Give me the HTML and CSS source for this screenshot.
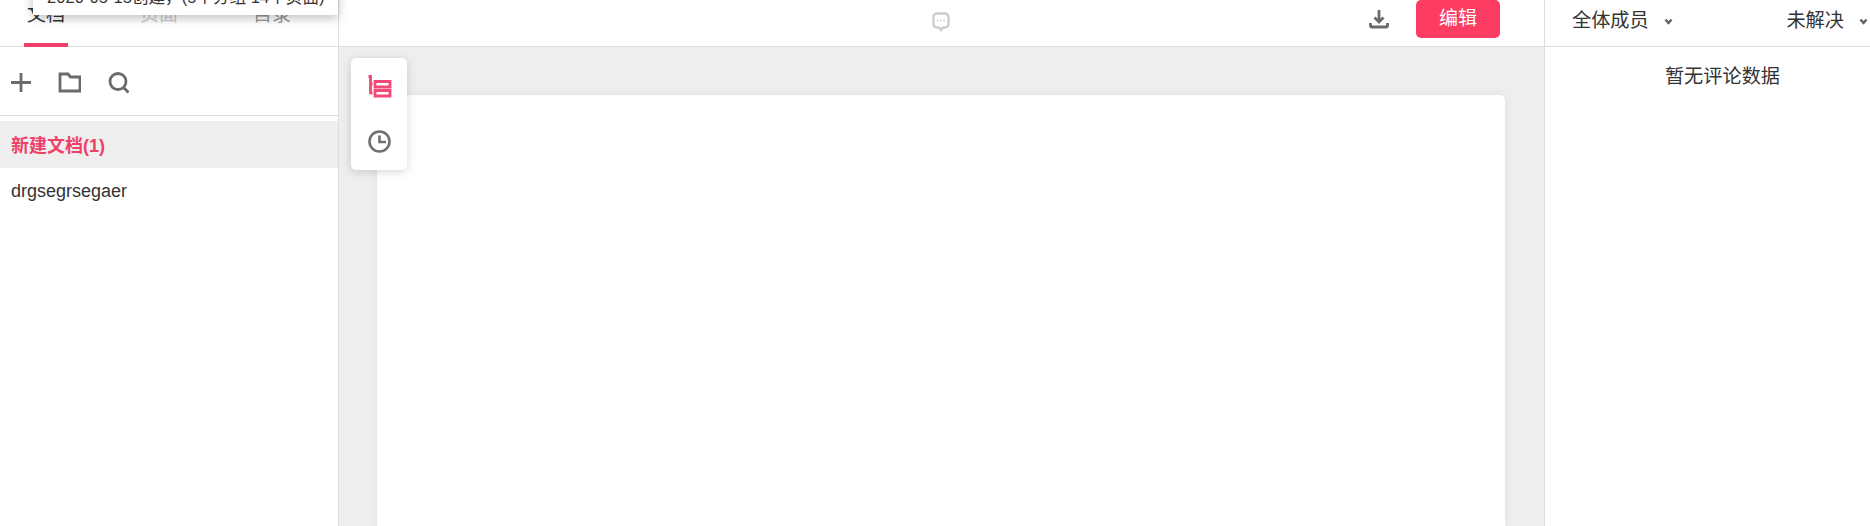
FILE: index.html
```html
<!DOCTYPE html>
<html lang="zh">
<head>
<meta charset="utf-8">
<title>文档</title>
<link rel="stylesheet" href="styles.css">
</head>
<body>
<div class="app">
  <aside class="left">
    <nav class="tabs">
      <span class="tab active">文档</span>
      <span class="tab pale">页面</span>
      <span class="tab">目录</span>
    </nav>
    <div class="tools">
      <svg class="ico" viewBox="0 0 23 23"><path d="M11 2v19M1 11.500h20"/></svg>
      <svg class="ico" viewBox="0 0 23 23"><path d="M2 3h8l2.500 3H22v14H2z"/></svg>
      <svg class="ico" viewBox="0 0 23 23"><circle cx="12" cy="10.500" r="8"/><path d="M17.500 16.500l5 5"/></svg>
    </div>
    <div class="list">
      <div class="group">新建文档(1)</div>
      <div class="item">drgsegrsegaer</div>
    </div>
    <div class="tip">2020-05-15创建，(5个分组 14个页面)</div>
  </aside>
  <main class="center">
    <header class="bar">
      <svg class="chat" viewBox="0 0 18 20"><path d="M5 1.500h8a3.500 3.500 0 0 1 3.500 3.500v7a3.500 3.500 0 0 1-3.500 3.500h-2L9 18l-2-2.500H5A3.500 3.500 0 0 1 1.500 12V5A3.500 3.500 0 0 1 5 1.500z"/><path class="dots" d="M5 8.500h1.500M8.300 8.500h1.500M11.500 8.500h1.500"/></svg>
      <div class="actions">
        <svg class="dl" viewBox="0 0 20 20"><path d="M10 1v12M5.500 8.500l4.500 4.500 4.500-4.500"/><path d="M1.500 14v2.500a1.500 1.500 0 0 0 1.500 1.500h14a1.500 1.500 0 0 0 1.500-1.500V14"/></svg>
        <button class="edit">编辑</button>
      </div>
    </header>
    <div class="stage">
      <div class="doc"></div>
      <div class="float">
        <svg class="fi pink" viewBox="0 0 23 23"><path d="M.5 2.500h2V20M2.500 10h2M2.500 19h2M7 7.500h15V13H7zM7 16.500h15V22H7z"/></svg>
        <svg class="fi" viewBox="0 0 23 23"><circle cx="11.500" cy="11.500" r="10"/><path d="M11.500 5.500v6.500h6.500"/></svg>
      </div>
    </div>
  </main>
  <aside class="right">
    <header class="filters">
      <span class="filter">全体成员<i class="caret"></i></span>
      <span class="filter">未解决<i class="caret"></i></span>
    </header>
    <p class="empty">暂无评论数据</p>
  </aside>
</div>
</body>
</html>
```
FILE: styles.css
```css
* { box-sizing: border-box; }
html, body { margin: 0; height: 100%; overflow: hidden; }
body { font-family: "Liberation Sans", "Noto Sans CJK SC", sans-serif; color: #333; background: #fff; }
.app { display: flex; height: 526px; }
.left { position: relative; width: 339px; flex: none; border-right: 1px solid #ddd; background: #fff; }
.tabs { height: 47px; display: flex; gap: 69px; padding-left: 24px; border-bottom: 1px solid #ddd; }
.tab { width: 44px; height: 47px; font-size: 19px; line-height: 30px; text-align: center; color: #999; white-space: nowrap; }
.tab.pale { color: #ccc; }
.tab.active { color: #333; border-bottom: 4px solid #ee4068; }
.tools { height: 69px; display: flex; align-items: center; gap: 25px; padding: 2px 0 0 10px; border-bottom: 1px solid #ddd; }
.ico { width: 23px; height: 23px; fill: none; stroke: #6b6b6b; stroke-width: 2.800; }
.list { padding-top: 5px; }
.group { height: 47px; line-height: 51px; padding-left: 11px; background: #eee; color: #ee4068; font-size: 18px; font-weight: 700; }
.item { height: 47px; line-height: 47px; padding-left: 11px; font-size: 18px; color: #333; }
.tip { position: absolute; left: 33px; top: -20px; width: 305px; height: 35px; padding-left: 14px; background: #fff; font-size: 16.600px; line-height: 36px; white-space: nowrap; box-shadow: 0 3px 10px rgba(0,0,0,.25); }
.center { flex: 1; display: flex; flex-direction: column; min-width: 0; }
.bar { height: 47px; flex: none; display: flex; align-items: center; border-bottom: 1px solid #ddd; background: #fff; padding-left: 593px; }
.chat { width: 18px; height: 20px; margin-top: -2px; fill: none; stroke: #ccc; stroke-width: 2.400; }
.dots { stroke-width: 1.400; }
.actions { margin-left: auto; display: flex; align-items: flex-start; gap: 27px; padding-right: 44px; align-self: flex-start; }
.dl { width: 20px; height: 20px; margin-top: 9px; fill: none; stroke: #6b6b6b; stroke-width: 2.800; }
.edit { width: 84px; height: 38px; border: 0; border-radius: 5px; background: #fd3c63; color: #fff; font: 19px/36px "Liberation Sans", "Noto Sans CJK SC", sans-serif; padding: 0; }
.stage { flex: 1; position: relative; background: #eee; padding: 48px 39px 0 38px; display: flex; min-height: 0; }
.doc { flex: 1; background: #fff; border-radius: 5px 5px 0 0; box-shadow: 0 0 8px rgba(0,0,0,.06); }
.float { position: absolute; left: 12px; top: 11px; width: 56px; height: 112px; background: #fff; border-radius: 5px; box-shadow: 0 2px 10px rgba(0,0,0,.16); display: flex; flex-direction: column; align-items: center; gap: 33px; padding-top: 16px; }
.fi { width: 23px; height: 23px; fill: none; stroke: #707070; stroke-width: 2.600; overflow: visible; }
.fi.pink { stroke: #f04a75; stroke-width: 2.800; }
.right { width: 326px; flex: none; border-left: 1px solid #ddd; background: #fff; }
.filters { height: 47px; display: flex; justify-content: space-between; padding: 1px 3px 0 27px; border-bottom: 1px solid #ddd; }
.filter { font-size: 19.200px; line-height: 39px; height: 39px; color: #333; display: flex; align-items: center; white-space: nowrap; }
.caret { flex: none; width: 7px; height: 7px; margin: 0 0 0 16px; border: solid #666; border-width: 0 3px 3px 0; transform: rotate(45deg) scale(.8); }
.empty { margin: 0; padding: 16px 0 0 30px; text-align: center; font-size: 19.200px; line-height: 28px; color: #333; }
```
